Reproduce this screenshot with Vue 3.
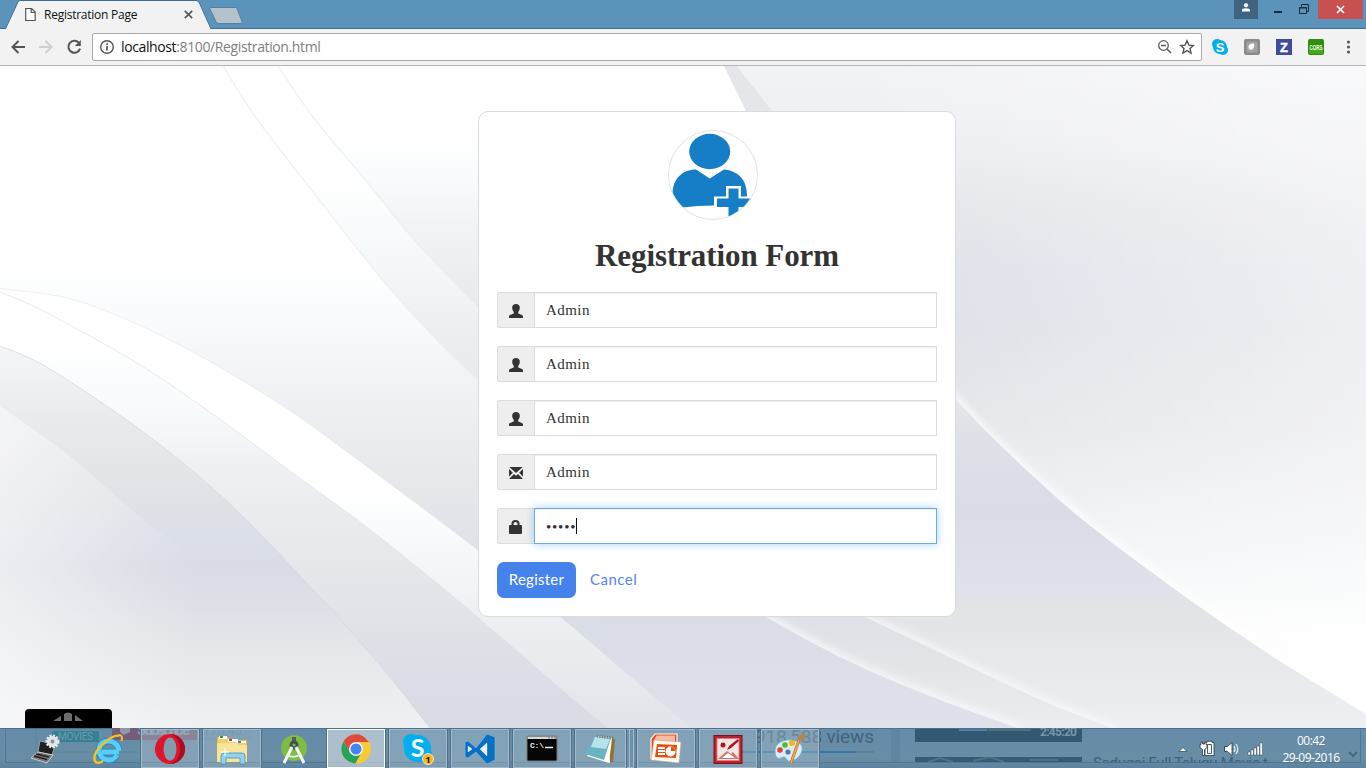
<script setup>
const fields = [
  { icon: 'user', value: 'Admin' },
  { icon: 'user', value: 'Admin' },
  { icon: 'user', value: 'Admin' },
  { icon: 'mail', value: 'Admin' },
  { icon: 'lock', value: '•••••', focus: true }
]
const apps = [
  { id: 'device', plain: true }, { id: 'ie', plain: true }, { id: 'opera' }, { id: 'files' },
  { id: 'android', plain: true }, { id: 'chrome', active: true }, { id: 'skype' }, { id: 'code' },
  { id: 'cmd' }, { id: 'notes', stacked: true }, { id: 'slides' }, { id: 'pictures' }, { id: 'paint' }
]

// Smooth curve through a list of points (Catmull-Rom converted to cubic Béziers).
function curve(points) {
  let d = `M${points[0]}`
  for (let i = 0; i < points.length - 1; i++) {
    const a = points[Math.max(i - 1, 0)]
    const b = points[i]
    const c = points[i + 1]
    const e = points[Math.min(i + 2, points.length - 1)]
    d += `C${b[0] + (c[0] - a[0]) / 6} ${b[1] + (c[1] - a[1]) / 6} ${c[0] - (e[0] - b[0]) / 6} ${c[1] - (e[1] - b[1]) / 6} ${c[0]} ${c[1]}`
  }
  return d
}
const inner = curve([[278, 66], [313, 117], [367, 182], [417, 243], [478, 307], [620, 450], [766, 617]])
const outer = curve([[223, 66], [257, 119], [317, 197], [380, 277], [433, 336], [478, 380], [600, 490], [766, 617]])
const upper = curve([[0, 288.5], [67, 298], [130, 321], [200, 356], [283, 406], [350, 454], [478, 550], [560, 617], [625, 672], [691, 728]])
const middle = curve([[0, 292], [43, 311], [132, 360], [207, 410], [290, 471], [377, 535], [480, 619], [560, 688], [608, 728]])
const lower = curve([[0, 346], [50, 369], [150, 437], [233, 507], [317, 594], [380, 665], [430, 728]])
const lowest = curve([[0, 406], [67, 454], [133, 511], [187, 553]])
const right = curve([[880, 325], [956, 400], [990, 435], [1033, 476], [1083, 520], [1150, 571], [1217, 619], [1283, 663], [1366, 714]])
const ridgeA = curve([[800, 580], [866, 617], [920, 643], [987, 675], [1050, 704], [1115, 729]])
const ridgeB = curve([[700, 575], [766, 617], [848, 661], [930, 696], [1020, 729]])
</script>

<template>
  <div class="screen">
    <header class="titlebar">
      <svg class="tabshape" width="250" height="29" viewBox="0 0 250 29">
        <path d="M0 28.5H6L18 2Q19 .5 20.500 .5H196Q198 .5 199 2.500L210.500 28.500H250" fill="none" stroke="#3d6d93" />
        <path d="M6 29L18.500 2Q19 1 20.500 1H196Q198 1 198.600 2.500L210.500 29Z" fill="#f2f2f2" />
        <path d="M210.500 7.500H235Q236.500 7.500 237 8.500L242 21.500Q242.500 23.500 240.500 23.500H219Q217 23.500 216 21.500L210 9Q209.500 7.500 210.500 7.500Z" fill="#b6c2ca" stroke="#4e83a9" />
      </svg>
      <div class="tab">
        <svg width="12" height="15" viewBox="0 0 12 15"><path d="M.7 1.500H6.700L10.200 5V13.500H.7ZM6.200 1.500V5.500H10.200" fill="#fff" stroke="#555" stroke-width="1.200" /></svg>
        <span class="tabtitle">Registration Page</span>
        <svg width="9" height="9" viewBox="0 0 9 9"><path d="M.8 .8L8.200 8.200M8.200 .8L.8 8.200" stroke="#5a5a5a" stroke-width="1.700" /></svg>
      </div>
      <div class="wincontrols">
        <span class="profile"><svg width="10" height="10" viewBox="0 0 10 10"><circle cx="5" cy="2.300" r="2.100" fill="#fff" /><path d="M1 8.500V7Q1 5.200 5 5.200T9 7V8.500Z" fill="#fff" /></svg></span>
        <span class="min"></span>
        <svg class="restore" width="11" height="11" viewBox="0 0 11 11"><path d="M2.500 2.500V.5H9.500V7.500H7.500" fill="none" stroke="#1c2a36" /><path d="M.5 3.500H7.500V9.500H.5ZM.5 4H7.500" fill="none" stroke="#1c2a36" /></svg>
        <span class="close"><svg width="9" height="9" viewBox="0 0 9 9"><path d="M1 1L8 8M8 1L1 8" stroke="#fff" stroke-width="1.700" /></svg></span>
      </div>
    </header>

    <nav class="toolbar">
      <svg class="navicons" width="76" height="18" viewBox="0 0 76 18">
        <path d="M16 9H4M9.500 3L3.500 9L9.500 15" fill="none" stroke="#555" stroke-width="2" />
        <path d="M30 9H42M36.500 3L42.500 9L36.500 15" fill="none" stroke="#cfcfcf" stroke-width="2" />
        <path d="M69.800 4.600A6 6 0 1 0 71.100 10.700" fill="none" stroke="#555" stroke-width="2" />
        <path d="M71.800 2V8H65.800Z" fill="#555" />
      </svg>
      <div class="omnibox">
        <svg width="16" height="16" viewBox="0 0 16 16"><circle cx="8" cy="8" r="6.300" fill="none" stroke="#555" stroke-width="1.400" /><path d="M8 7V11.500M8 4.300V6" stroke="#555" stroke-width="1.700" /></svg>
        <span class="url">localhost<i>:8100/Registration.html</i></span>
        <svg class="omniicons" width="38" height="16" viewBox="0 0 38 16">
          <circle cx="6.500" cy="6.500" r="4.800" fill="none" stroke="#5c5c5c" stroke-width="1.300" /><path d="M4 6.500H9M10 10L14 14" stroke="#5c5c5c" stroke-width="1.600" />
          <path d="M30 1.800L31.900 6.100L36.300 6.500L33 9.500L34 14L30 11.600L26 14L27 9.500L23.700 6.500L28.100 6.100Z" fill="none" stroke="#555" stroke-width="1.400" />
        </svg>
      </div>
      <div class="extensions">
        <svg width="16" height="16" viewBox="0 0 16 16"><circle cx="5" cy="5" r="5" fill="#00aff0" /><circle cx="11" cy="11" r="5" fill="#00aff0" /><circle cx="8" cy="8" r="7" fill="#00aff0" /><text x="8" y="12.500" text-anchor="middle" font-size="13" font-weight="bold" fill="#fff" font-family="Liberation Sans, sans-serif">S</text></svg>
        <svg width="16" height="16" viewBox="0 0 16 16"><rect width="16" height="16" rx="2" fill="#8c8c8c" /><rect x="2" y="2" width="12" height="12" rx="3" fill="#a2a2a2" stroke="#828282" stroke-width=".5" /><path d="M5 10C3.500 6 6 4 10 4.500C11 8 9 11 7 11Z" fill="#fff" /></svg>
        <svg width="16" height="16" viewBox="0 0 16 16"><rect width="16" height="16" fill="#3f4b9b" /><text x="8" y="12.500" text-anchor="middle" font-size="13" font-weight="bold" fill="#fff" stroke="#fff" stroke-width=".4" font-family="Liberation Sans, sans-serif">Z</text></svg>
        <svg width="16" height="16" viewBox="0 0 16 16"><rect width="16" height="16" rx="2" fill="#2f8f0c" /><rect x="1" y="9" width="14" height="6" fill="#46a81b" /><text x="1.500" y="10.500" textLength="13" lengthAdjust="spacingAndGlyphs" font-size="7" font-weight="bold" fill="#f5ffe9" font-family="Liberation Sans, sans-serif">CORS</text></svg>
        <svg width="16" height="16" viewBox="0 0 16 16"><g fill="#5a5a5a"><circle cx="8.500" cy="3" r="1.600" /><circle cx="8.500" cy="8" r="1.600" /><circle cx="8.500" cy="13" r="1.600" /></g></svg>
      </div>
    </nav>

    <main class="page">
      <svg class="backdrop" width="1366" height="662" viewBox="0 66 1366 662">
        <defs>
          <linearGradient id="gBase" gradientUnits="userSpaceOnUse" x1="0" y1="66" x2="0" y2="728"><stop offset=".1" stop-color="#fff" /><stop offset=".17" stop-color="#f9fbfc" /><stop offset=".24" stop-color="#f1f3f5" /><stop offset=".4" stop-color="#e6e7ec" /><stop offset=".83" stop-color="#d9dce5" /><stop offset="1" stop-color="#dfe2ea" /></linearGradient>
          <linearGradient id="gBand" gradientUnits="userSpaceOnUse" x1="0" y1="66" x2="0" y2="728"><stop offset=".16" stop-color="#fff" /><stop offset=".28" stop-color="#f6f9fa" /><stop offset=".4" stop-color="#edeef2" /><stop offset=".8" stop-color="#dadde6" /></linearGradient>
          <linearGradient id="gA" gradientUnits="userSpaceOnUse" x1="0" y1="260" x2="0" y2="728"><stop offset="0" stop-color="#fff" /><stop offset=".12" stop-color="#f9fbfc" /><stop offset=".27" stop-color="#f1f2f5" /><stop offset=".45" stop-color="#e8e9ed" /><stop offset=".63" stop-color="#e0e1e7" /><stop offset=".78" stop-color="#d9dde6" /><stop offset="1" stop-color="#dfe2ea" /></linearGradient>
          <linearGradient id="gU" gradientUnits="userSpaceOnUse" x1="0" y1="488" x2="0" y2="728"><stop offset="0" stop-color="#fff" /><stop offset=".25" stop-color="#f6f9fa" /><stop offset=".5" stop-color="#eff0f4" /><stop offset="1" stop-color="#e3e4e9" /></linearGradient>
          <linearGradient id="gM" gradientUnits="userSpaceOnUse" x1="0" y1="335" x2="0" y2="728"><stop offset="0" stop-color="#fff" /><stop offset=".2" stop-color="#f7fafb" /><stop offset=".32" stop-color="#f0f1f5" /><stop offset=".55" stop-color="#e7e8ec" /><stop offset=".75" stop-color="#e0e2e8" /><stop offset=".93" stop-color="#d9dce5" /></linearGradient>
          <linearGradient id="gL" gradientUnits="userSpaceOnUse" x1="0" y1="346" x2="0" y2="728"><stop offset="0" stop-color="#f4f6f8" /><stop offset=".2" stop-color="#e9eaed" /><stop offset=".4" stop-color="#e1e2e7" /><stop offset=".5" stop-color="#dbdfe8" /><stop offset=".58" stop-color="#d8dbe4" /><stop offset=".71" stop-color="#e0e2e9" /><stop offset=".77" stop-color="#e4e5e9" /><stop offset="1" stop-color="#f0f1f4" /></linearGradient>
          <linearGradient id="gF" gradientUnits="userSpaceOnUse" x1="0" y1="0" x2="200" y2="0"><stop offset="0" stop-color="#fff" stop-opacity=".5" /><stop offset=".5" stop-color="#fff" stop-opacity=".25" /><stop offset="1" stop-color="#fff" stop-opacity="0" /></linearGradient>
          <linearGradient id="gR" gradientUnits="userSpaceOnUse" x1="0" y1="66" x2="0" y2="728"><stop offset="0" stop-color="#f2f3f6" /><stop offset=".12" stop-color="#edeef2" /><stop offset=".22" stop-color="#e4e5ea" /><stop offset=".31" stop-color="#dfe2ea" /><stop offset=".4" stop-color="#e0e2e9" /><stop offset=".54" stop-color="#e7e8ec" /><stop offset=".66" stop-color="#eff0f3" /><stop offset=".75" stop-color="#f4f7f8" /><stop offset=".85" stop-color="#fdfdfd" /><stop offset="1" stop-color="#fff" /></linearGradient>
          <linearGradient id="gRX" gradientUnits="userSpaceOnUse" x1="960" y1="400" x2="1366" y2="250"><stop offset="0" stop-color="#fff" stop-opacity="0" /><stop offset="1" stop-color="#fff" stop-opacity=".5" /></linearGradient>
          <linearGradient id="gB" gradientUnits="userSpaceOnUse" x1="0" y1="400" x2="0" y2="728"><stop offset="0" stop-color="#e5e6ea" /><stop offset=".12" stop-color="#dee1e8" /><stop offset=".34" stop-color="#d9dce5" /><stop offset=".58" stop-color="#dfe2ea" /><stop offset=".63" stop-color="#e2e3e7" /><stop offset="1" stop-color="#eeeff3" /></linearGradient>
          <linearGradient id="gS" gradientUnits="userSpaceOnUse" x1="0" y1="610" x2="0" y2="728"><stop offset="0" stop-color="#dde0e8" /><stop offset=".4" stop-color="#e3e4e8" /><stop offset="1" stop-color="#ecedf0" /></linearGradient>
          <filter id="soft" filterUnits="userSpaceOnUse" x="600" y="66" width="900" height="800"><feGaussianBlur stdDeviation="3.500" /></filter>
          <clipPath id="cR"><path :d="right + 'V66H880Z'" /></clipPath>
          <clipPath id="cA"><path :d="ridgeA + 'H1366V560Z'" /></clipPath>
          <clipPath id="cB"><path :d="ridgeB + 'H1366V560Z'" /></clipPath>
        </defs>
        <rect y="66" width="1366" height="662" fill="#fff" />
        <path :d="inner + 'V728H1366V66Z'" fill="url(#gBase)" />
        <path :d="outer + 'L766 617V66H278L223 66Z'" fill="url(#gBand)" />
        <path :d="inner + 'L900 617V66Z'" fill="url(#gBase)" />
        <path :d="outer + 'L1018 728H0V66Z'" fill="url(#gA)" />
        <path :d="outer" fill="none" stroke="#eceded" stroke-opacity=".8" stroke-width="1.300" />
        <path :d="inner" fill="none" stroke="#eceded" stroke-opacity=".8" stroke-width="1.300" />
        <path :d="upper + 'H0Z'" fill="url(#gU)" />
        <path :d="middle + 'H0Z'" fill="url(#gM)" />
        <path :d="upper" fill="none" stroke="#dce1e3" stroke-width=".5" />
        <path :d="middle" fill="none" stroke="#dce1e3" stroke-width=".7" />
        <path :d="lower + 'H0Z'" fill="url(#gL)" />
        <path :d="lower" fill="none" stroke="#d4d6da" stroke-width=".9" stroke-opacity=".8" />
        <path :d="lowest + 'L200 563V728H0Z'" fill="url(#gF)" />
        <path d="M724 66L746 111L800 580L956 680L1366 728V66Z" fill="url(#gB)" clip-path="url(#cTop)" />
        <path :d="ridgeB + 'H1366V500H690Z'" fill="url(#gS)" />
        <path :d="ridgeB + 'H600V600H690Z'" fill="url(#gBase)" />
        <path :d="upper + 'H0Z'" fill="url(#gU)" clip-path="url(#cBottom)" />
        <path :d="ridgeA + 'H1366V500H800Z'" fill="url(#gB)" />
        <clipPath id="cBottom"><path d="M482 600H720V728H482Z" /></clipPath>
        <path :d="middle + 'H0Z'" fill="url(#gM)" clip-path="url(#cBottom)" />
        <path d="M737 66L772 111L880 325H1366V66Z" fill="url(#gR)" />
        <path :d="right + 'V66H880Z'" fill="url(#gR)" />
        <path :d="right + 'V66H880Z'" fill="url(#gRX)" />
        <g clip-path="url(#cR)"><path :d="right" filter="url(#soft)" fill="none" stroke-width="8" stroke="#fff" stroke-opacity=".75" /></g>
        <g clip-path="url(#cA)"><path :d="ridgeA" filter="url(#soft)" fill="none" stroke-width="8" stroke="#f8f9fb" stroke-opacity=".85" /></g>
        <g clip-path="url(#cB)"><path :d="ridgeB" filter="url(#soft)" fill="none" stroke-width="8" stroke="#f8f9fb" stroke-opacity=".85" /></g>
      </svg>

      <section class="card">
        <svg class="avatar" width="90" height="90" viewBox="0 0 90 90">
          <defs><clipPath id="avatarClip"><circle cx="45" cy="45" r="44" /></clipPath></defs>
          <circle cx="45" cy="45" r="44.500" fill="#fff" stroke="#e3e3e3" />
          <g clip-path="url(#avatarClip)">
            <ellipse cx="41.700" cy="21.500" rx="20.500" ry="17.700" fill="#167ec6" />
            <path d="M4.500 65C4.500 48 15 39.500 28 39.500L41.700 48.500L56 39.500C70 41 79 49 79 66V78L46 75.500Q30 75.500 14 77.500Z" fill="#167ec6" />
            <path d="M58 56H73V66.500H90V90H58V77H46V66.500H58Z" fill="#fff" />
            <path d="M60.500 58.500H70.500V68.500H88V77H70.500V90H60.500V77H49V68.500H60.500Z" fill="#167ec6" />
          </g>
        </svg>
        <h1>Registration Form</h1>
        <div v-for="(field, i) in fields" :key="i" class="field" :class="{ focus: field.focus }">
          <span class="addon">
            <svg width="14" height="14" viewBox="0 0 14 14" fill="#333">
              <path v-if="field.icon === 'user'" d="M7 0C9.300 0 10.800 1.300 10.800 3.500C10.800 5.500 10.200 6.800 9.200 8V9.300C9.200 10 14 10.700 14 12.500V14H0V12.500C0 10.700 4.800 10 4.800 9.300V8C3.800 6.800 3.200 5.500 3.200 3.500C3.200 1.300 4.700 0 7 0Z" />
              <g v-else-if="field.icon === 'mail'"><path d="M.3 1H13.700L7 7ZM0 3L3.900 6.700L0 10.500ZM14 3L10.100 6.700L14 10.500ZM0 13L5 8L7 9.700L9 8L14 13Z" /></g>
              <path v-else d="M2.500 5V3.500Q2.500 0 6.500 0T10.500 3.500V5H12Q13 5 13 6V13Q13 14 12 14H1Q0 14 0 13V6Q0 5 1 5ZM4.500 5H8.500V3.700Q8.500 2 6.500 2T4.500 3.700Z" />
            </svg>
          </span>
          <span class="value" :class="{ dots: field.focus }">{{ field.value }}<b v-if="field.focus" class="caret"></b></span>
        </div>
        <div class="actions">
          <button type="button"><span>Register</span></button>
          <a>Cancel</a>
        </div>
      </section>

      <div class="dock">
        <svg width="30" height="10" viewBox="0 0 30 10" fill="#6d6d6d"><path d="M0 9L8 4V9ZM22 3L30 9H22ZM11 2Q15 -1 19 2V9H11Z" /></svg>
      </div>
    </main>

    <footer class="taskbar">
      <svg class="ghosts" width="1366" height="40" viewBox="0 0 1366 40">
        <path d="M5.500 1V34.500H1360.500V1" fill="none" stroke="#426d8c" stroke-opacity=".6" />
        <path d="M36 1V34M249.500 1V11H140M36 24H141" fill="none" stroke="#48728f" stroke-opacity=".3" />
        <rect x="52" y="3" width="47" height="11" rx="1" fill="#378093" /><text x="58" y="11.500" font-size="10" textLength="35" fill="#6c9aaa">MOVIES</text>
        <rect x="112" y="0" width="85" height="12" fill="#735e79" /><path d="M120 0H130V4L124 7L120 4Z" fill="#8f98aa" /><text x="137" y="7" font-size="15" textLength="53" font-weight="bold" fill="#8396a9">Subscribe</text><text x="203" y="7" font-size="13" fill="#587c97">175,457</text>
        <text x="755" y="15" font-size="19" textLength="119" fill="#43637b">918,588 views</text>
        <path d="M742 24H856" stroke="#3576a7" stroke-width="2" /><path d="M856 24H874" stroke="#54748b" stroke-width="2" stroke-opacity=".5" />
        <path d="M891 0H900V34H891Z" fill="#527b99" fill-opacity=".35" />
        <path d="M915 1H1082V14H915Z" fill="#335872" /><path d="M959 1H987V3H959Z" fill="#527da0" /><path d="M988 1H1031V3H988Z" fill="#4d7078" />
        <text x="1040" y="8" font-size="12" textLength="37" font-weight="bold" fill="#7896a9">2:45:20</text>
        <path d="M915 29H1082V34H915Z" fill="#365b75" /><path d="M928 34L940 30L953 34M973 33L990 29L1004 34M1030 32H1058" fill="none" stroke="#6c8799" stroke-width="2" stroke-opacity=".5" />
        <svg x="1090" y="28" width="190" height="6.500"><text x="3" y="12" font-size="15" textLength="175" fill="#3e617b">Sadugai Full Telugu Movie t</text></svg>
        <path d="M1349 24L1353 28L1357 24" fill="none" stroke="#45677f" stroke-width="2" />
      </svg>
      <div class="apps">
        <div v-for="app in apps" :key="app.id" class="app" :class="{ plain: app.plain, active: app.active, stacked: app.stacked }">
          <svg width="34" height="34" viewBox="0 0 34 34">
            <g v-if="app.id === 'device'">
              <path d="M11 9L26 13L23 23L9 20Z" fill="#1d1f21" stroke="#aaa" stroke-width=".8" /><path d="M9 20L24 23L18 31L2 26Z" fill="#777" stroke="#ddd" stroke-width=".8" /><path d="M7 22L20 25M5 24L18 27.500" stroke="#222" stroke-width="1.300" /><circle cx="23.500" cy="9.500" r="5.500" fill="#e4e4e4" stroke="#e9e9e9" stroke-width="3" stroke-dasharray="2 1.200" /><circle cx="23.500" cy="9.500" r="2" fill="#8b9398" />
            </g>
            <g v-else-if="app.id === 'ie'" fill="none">
              <path d="M28 20H11M26 23C22 31 8 29 8 18C8 6 27 6 28 19" stroke="#1e83c4" stroke-width="6.500" /><path d="M28 20H11M26 23C22 31 8 29 8 18C8 6 27 6 28 19" stroke="#58cdf8" stroke-width="5" /><path d="M28 4C22 1 0 19 4 29C5 32 9 31 12 29" stroke="#f4c51e" stroke-width="2.400" /><path d="M27 3.500C30 2.500 32 4 30.500 9" stroke="#f4c51e" stroke-width="2" />
            </g>
            <g v-else-if="app.id === 'opera'">
              <ellipse cx="17" cy="17" rx="15" ry="15" fill="#df142b" /><path d="M17 2A15 15 0 0 1 17 32C24 30 27 24 27 17S24 4 17 2Z" fill="#a90d1e" /><ellipse cx="17" cy="17" rx="6.500" ry="11.500" fill="#809caf" />
            </g>
            <g v-else-if="app.id === 'files'">
              <path d="M2 5H13L15 8H32V30H2Z" fill="#eed071" stroke="#c59b39" stroke-width=".7" /><path d="M4 4H12V7H4Z" fill="#fff" /><path d="M5 4H8V6H5Z" fill="#28a32c" /><path d="M13 7H23V10H13Z" fill="#fff" /><path d="M14 7H17V9H14Z" fill="#d3311d" /><path d="M22 9H31V11H22Z" fill="#fff" /><path d="M23 9H26V11H23Z" fill="#3587cf" /><path d="M2 11H22L24 13H32V30H2Z" fill="#f8e49a" /><path d="M6 32V24Q6 21 9 21H27Q30 21 30 24V32H25V26H11V32Z" fill="#91d2ee" stroke="#4094bd" stroke-width=".8" /><path d="M10 16V24M6 20H14" stroke="#fff" />
            </g>
            <g v-else-if="app.id === 'android'">
              <circle cx="17" cy="16" r="13" fill="#7ebc43" /><path d="M15 5H19V10H15Z" fill="#52616a" /><circle cx="17" cy="13" r="3" fill="none" stroke="#424f56" stroke-width="3" /><path d="M15 15L7 31M19 15L27 31" stroke="#f4f4f4" stroke-width="3" /><path d="M10 23Q17 27 24 22" fill="none" stroke="#eee" stroke-width="2" />
            </g>
            <g v-else-if="app.id === 'chrome'">
              <circle cx="17" cy="17" r="14.500" fill="#fac934" /><path d="M4.500 9.500A14.500 14.500 0 0 0 16.500 31.500L23 20L11 20Z" fill="#24a35b" /><path d="M4.500 9.500L11 20L17 10H30L28 8Q22 0 12 3Q7 5 4.500 9.500Z" fill="#dd4b3e" /><path d="M17 10H30A14.500 14.500 0 0 1 16.500 31.500L23 20Z" fill="#fac934" /><circle cx="17" cy="17" r="7" fill="#f5f5f5" /><circle cx="17" cy="17" r="5.500" fill="#4285f4" />
            </g>
            <g v-else-if="app.id === 'skype'">
              <circle cx="10" cy="10" r="8" fill="#00aff0" /><circle cx="23" cy="23" r="8" fill="#00aff0" /><circle cx="16.500" cy="16.500" r="13.500" fill="#00aff0" /><text x="16.500" y="25" text-anchor="middle" font-size="25" font-weight="bold" fill="#fff" font-family="Lato, sans-serif">S</text><circle cx="27" cy="27" r="5.500" fill="#ffb51c" stroke="#fff4ce" stroke-width=".8" /><text x="27" y="30.500" text-anchor="middle" font-size="9.500" font-weight="bold" fill="#222">1</text>
            </g>
            <g v-else-if="app.id === 'code'">
              <path d="M2 10L5 9L13 16L24 2L32 5V28L24 32L13 20L5 26L2 25ZM5 14V20L9 17ZM24 11L17 17L24 24Z" fill="#0870c2" fill-rule="evenodd" stroke="#86b9dd" stroke-width=".6" /><path d="M5 14V20L9 17ZM24 11L17 17L24 24Z" fill="#e9f1f5" />
            </g>
            <g v-else-if="app.id === 'cmd'">
              <rect x="2" y="4" width="30" height="25" rx="1" fill="#050505" stroke="#777" /><path d="M2.500 4.500H31.500V7H2.500Z" fill="#d4d8da" /><path d="M24 5V6.500M27 5V6.500M30 5V6.500" stroke="#555" /><text x="5" y="16" font-size="8" textLength="14" font-weight="bold" fill="#eee" font-family="Liberation Mono, monospace">C:\</text><path d="M20 15.500H28" stroke="#eee" stroke-width="1.500" />
            </g>
            <g v-else-if="app.id === 'notes'">
              <path d="M13 5L31 7L29 30L22 30Z" fill="#957037" /><path d="M13 4L28 6L25 31L3 24Z" fill="#fcfcef" /><path d="M11 4L27 6L20 28L1 22Z" fill="#68b4c4" /><path d="M11 5L26 7L22 17L7 15Z" fill="#b7e4ea" /><path d="M13 4L29 6" stroke="#777" stroke-width="3" stroke-dasharray="1 1.500" /><path d="M21 28L25 20L26 31Z" fill="#fff" />
            </g>
            <g v-else-if="app.id === 'slides'">
              <path d="M6 2H28V27H2V7Z" fill="#e94b14" stroke="#fff" stroke-width="1.200" /><path d="M7.500 3.500H26V10H4Z" fill="#f7baa3" /><path d="M5 8L32 10L30 31L2 28Z" fill="#fffaf3" stroke="#cda28b" stroke-width=".6" /><path d="M8 12L28 13L27 26L6 25Z" fill="#e5500f" /><path d="M9 16H16M9 19H16M9 22H16" stroke="#fff" stroke-width="1.800" /><circle cx="21.500" cy="19.500" r="5" fill="#fff" /><path d="M22 19V15Q26 15 26 19Z" fill="#e5500f" />
            </g>
            <g v-else-if="app.id === 'pictures'">
              <rect x="3" y="3.500" width="28" height="28" fill="#b72330" stroke="#7d1019" /><rect x="6" y="6.500" width="22" height="22" fill="#f4e7e3" stroke="#e77" /><circle cx="12" cy="13" r="2.500" fill="#a61927" /><path d="M27 7L18 14L16 18L20 16L28 9Z" fill="#a61927" /><path d="M7 27L16 19L20 22L22 20L28 27Z" fill="#c77a72" /><path d="M11 26L17 21L24 26Z" fill="#fff" />
            </g>
            <g v-else>
              <path d="M2 20C1 9 16 5 25 10C34 15 27 27 19 29C13 31 14 24 10 25C6 28 2 26 2 20Z" fill="#d8edf6" stroke="#6db3d3" /><circle cx="7" cy="18" r="2.800" fill="#db453a" /><circle cx="12" cy="13" r="2.800" fill="#5cb832" /><circle cx="19" cy="11" r="3" fill="#f0b51d" /><circle cx="15" cy="20" r="2.600" fill="#527da1" /><path d="M18 31L26 8" stroke="#c86e21" stroke-width="3" /><path d="M18 31L26 8" stroke="#f1ab55" stroke-width="1.500" /><path d="M26 9L24 4L33 1L31 8Z" fill="#b38550" />
            </g>
          </svg>
        </div>
      </div>
      <div class="tray">
        <svg width="86" height="18" viewBox="0 0 86 18">
          <path d="M1 11.500L5 7.500L9 11.500Z" fill="#fff" stroke="#29465a" stroke-width=".7" />
          <g stroke="#243746" stroke-width=".8" fill="#fff"><path d="M29 2.500V1.200H34V2.500H36V15.500H27V2.500Z" /><path d="M23 2H24.500V4H26.500V2H28V4.500H29V7.500L26.500 9.500V15.500H24.500V9.500L22 7.500V4.500H23Z" /><path d="M29.500 4.500H33.500V13.500H29.500Z" fill="#eef3f6" /></g>
          <path d="M46.500 6.500H49.500L54 2.500V15.500L49.500 11.500H46.500Z" fill="#fff" stroke="#243746" stroke-width=".8" /><path d="M56 6Q58 9 56 12M58 4Q61.500 9 58 14" fill="none" stroke="#e9f1f6" stroke-width="1.200" />
          <path d="M70 15V12H72.500V15ZM73 15V10H75.500V15ZM76 15V8H78.500V15ZM79 15V6H81.500V15ZM82 15V3H84.500V15Z" fill="#fff" stroke="#304b5d" stroke-width=".5" />
        </svg>
        <div class="clock"><span class="time">00:42</span><span class="date">29-09-2016</span></div>
      </div>
    </footer>
  </div>
</template>

<style>
html, body { margin: 0; overflow: hidden; }
</style>
<style scoped>
* { box-sizing: border-box; }
svg { display: block; flex: none; }
.screen { width: 1366px; height: 768px; display: flex; flex-direction: column; overflow: hidden; font-family: "Open Sans", sans-serif; }
.titlebar { position: relative; height: 29px; flex: none; display: flex; justify-content: space-between; background: #5b93bb; border-bottom: 1px solid #3e6d92; }
.tabshape { position: absolute; left: 0; top: 0; }
.tab { position: relative; width: 210px; height: 29px; display: flex; align-items: center; padding-left: 25px; }
.tabtitle { width: 147px; margin-left: 7px; margin-right: -7px; font-size: 12px; line-height: 16px; letter-spacing: -.25px; color: #111; white-space: nowrap; }
.wincontrols { display: flex; height: 19px; }
.profile { width: 24px; height: 19px; background: #406480; display: grid; place-items: center; margin-right: 16px; }
.profile svg { margin-top: -3px; }
.min { width: 8px; height: 2px; background: #1c2a36; margin-top: 11px; margin-right: 17px; }
.restore { margin-top: 4px; margin-right: 8px; }
.close { width: 45px; height: 19px; background: #c75050; display: grid; place-items: center; margin-right: 3px; }
.toolbar { height: 37px; flex: none; display: flex; align-items: center; background: #f2f2f2; border-bottom: 1px solid #b6b6b6; padding-left: 9px; }
.navicons { margin-right: 7px; }
.omnibox { width: 1110px; height: 28px; border: 1px solid #a9a9a9; border-radius: 2px; background: #fff; display: flex; align-items: center; padding: 0 6px; }
.url { margin-left: 6px; font-size: 14px; line-height: 20px; letter-spacing: -.38px; color: #111; flex: 1; white-space: nowrap; }
.url i { font-style: normal; color: #808080; }
.extensions { display: flex; gap: 16px; margin-left: 10px; }
.page { position: relative; height: 662px; flex: none; padding: 45px 0 0 478px; overflow: hidden; }
.backdrop { position: absolute; left: 0; top: 0; }
.card { position: relative; width: 478px; height: 506px; padding: 18px; background: #fff; border: 1px solid #dadbdd; border-radius: 10px; }
.avatar { margin-left: 171px; }
h1 { margin: 18px 0; height: 36px; text-align: center; font: bold 31px/36px "Liberation Serif", serif; letter-spacing: -.08px; color: #333; }
.field { display: flex; width: 440px; height: 36px; margin-bottom: 18px; }
.addon { width: 37px; border: 1px solid #dcdcdc; border-right: 0; border-radius: 3px 0 0 3px; background: #eee; display: flex; align-items: center; padding-left: 11px; padding-top: 2px; }
.value { flex: 1; border: 1px solid #dcdcdc; padding-left: 11px; display: flex; align-items: center; font: 15px/20px "Liberation Serif", serif; letter-spacing: .45px; color: #333; box-shadow: inset 0 1px 1px rgba(0, 0, 0, .075); }
.focus .value { border-color: #66afe9; box-shadow: inset 0 1px 1px rgba(0, 0, 0, .075), 0 0 8px rgba(102, 175, 233, .6); }
.focus .dots { letter-spacing: .8px; padding-top: 2px; }
.caret { width: 1px; height: 16px; background: #111; margin-top: -2px; }
.actions { display: flex; align-items: center; height: 36px; font: 15px/20px Lato, sans-serif; padding-bottom: 1px; }
.actions button { width: 79px; height: 36px; margin-top: 1px; border: 0; border-radius: 7px; background: #4582ec; color: #fff; font: inherit; letter-spacing: .25px; padding: 0 0 2px; }
.actions a { margin-left: 14px; color: #5685ee; letter-spacing: .5px; margin-top: -1px; }
.dock { position: absolute; left: 25px; bottom: 0; width: 87px; height: 19px; background: #000; border-radius: 4px 4px 0 0; padding: 3px 0 0 28px; }
.taskbar { position: relative; height: 40px; flex: none; display: flex; justify-content: space-between; background: linear-gradient(#648ba8, #698da5 75%, #5c829e); border-top: 1px solid #45718f; }
.ghosts { position: absolute; left: 0; top: -1px; font-family: Roboto, sans-serif; }
.apps { position: relative; display: flex; gap: 4px; padding-left: 17px; height: 39px; }
.app { width: 58px; height: 39px; border: 1px solid #a7bac7; outline: 1px solid #4b718d; background: rgba(184, 203, 214, .35); display: flex; align-items: center; justify-content: center; }
.plain { border-color: transparent; outline: 0; background: none; }
.active { border: 1px solid #fff; background: rgba(210, 218, 224, .65); }
.stacked { width: 51px; margin-right: 7px; box-shadow: 4px 0 0 -1px #6d91aa, 4px 0 0 0 #a7bac7, 8px 0 0 -1px #6d91aa, 8px 0 0 0 #a7bac7; }
.tray { position: relative; display: flex; align-items: center; width: 188px; }
.tray > svg { margin-top: 0; }
.clock { display: flex; flex-direction: column; align-items: center; width: 66px; margin-left: 14px; color: #fff; font-size: 12px; line-height: 17px; letter-spacing: -.55px; white-space: nowrap; }
</style>
